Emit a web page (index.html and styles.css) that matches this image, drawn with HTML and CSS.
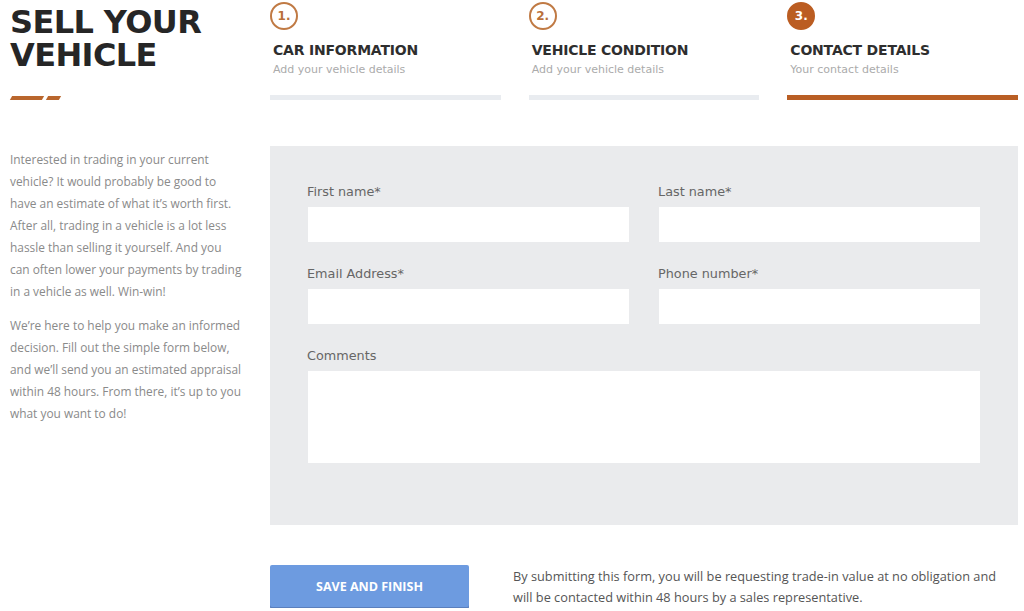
FILE: index.html
```html
<!DOCTYPE html>
<html lang="en">
<head>
<meta charset="utf-8">
<title>Sell Your Vehicle</title>
<link rel="stylesheet" href="styles.css">
</head>
<body>
<div class="page">
  <div class="intro-head">
    <h1 class="title">SELL YOUR<br>VEHICLE</h1>
    <div class="dashes"><span class="dash long"></span><span class="dash short"></span></div>
  </div>
  <ol class="steps">
    <li class="step">
      <span class="num">1.</span>
      <h2 class="step-title">CAR INFORMATION</h2>
      <p class="step-sub">Add your vehicle details</p>
      <div class="bar"></div>
    </li>
    <li class="step">
      <span class="num">2.</span>
      <h2 class="step-title">VEHICLE CONDITION</h2>
      <p class="step-sub">Add your vehicle details</p>
      <div class="bar"></div>
    </li>
    <li class="step active">
      <span class="num">3.</span>
      <h2 class="step-title">CONTACT DETAILS</h2>
      <p class="step-sub">Your contact details</p>
      <div class="bar"></div>
    </li>
  </ol>

  <div class="intro-text">
    <p>Interested in trading in your current vehicle? It would probably be good to have an estimate of what it’s worth first. After all, trading in a vehicle is a lot less hassle than selling it yourself. And you can often lower your payments by trading in a vehicle as well. Win-win!</p>
    <p>We’re here to help you make an informed decision. Fill out the simple form below, and we’ll send you an estimated appraisal within 48 hours. From there, it’s up to you what you want to do!</p>
  </div>

  <form class="panel">
    <label class="field"><span class="label">First name*</span><input class="input" type="text"></label>
    <label class="field"><span class="label">Last name*</span><input class="input" type="text"></label>
    <label class="field"><span class="label">Email Address*</span><input class="input" type="email"></label>
    <label class="field"><span class="label">Phone number*</span><input class="input" type="tel"></label>
    <label class="field wide"><span class="label">Comments</span><textarea class="textarea"></textarea></label>
  </form>

  <div class="spacer"></div>
  <div class="actions">
    <button class="btn" type="button">SAVE AND FINISH</button>
    <p class="note">By submitting this form, you will be requesting trade-in value at no obligation and will be contacted within 48 hours by a sales representative.</p>
  </div>
</div>
</body>
</html>
```
FILE: styles.css
```css
* { box-sizing: border-box; }
html, body { margin: 0; padding: 0; background: #fff; }
body { font-family: "Open Sans", "Liberation Sans", sans-serif; color: #333; }

.page {
  display: grid;
  grid-template-columns: 235px 748px;
  column-gap: 25px;
  padding: 0 0 0 10px;
  width: 1024px;
}

.intro-head { height: 146px; }
.title {
  margin: 6px 0 0;
  font-family: "DejaVu Sans", sans-serif;
  font-weight: 700;
  font-size: 32px;
  line-height: 33px;
  color: #262626;
  letter-spacing: -0.6px;
}
.dashes { display: flex; gap: 4px; margin-top: 24px; padding-left: 1px; }
.dash { height: 4px; background: #b9662d; transform: skewX(-30deg); }
.dash.long { width: 32px; }
.dash.short { width: 13px; }

.steps {
  list-style: none;
  margin: 0;
  padding: 0;
  display: grid;
  grid-template-columns: repeat(3, 1fr);
  column-gap: 28px;
  height: 146px;
}
.step { display: flex; flex-direction: column; align-items: flex-start; padding-top: 2px; }
.num {
  width: 28px; height: 28px;
  border: 2px solid #c07a44;
  border-radius: 50%;
  display: flex; align-items: center; justify-content: center;
  font-family: "DejaVu Sans", sans-serif;
  font-weight: 700; font-size: 12px;
  color: #b9703a;
}
.step.active .num { background: #bb5d22; border-color: #bb5d22; color: #fff; }
.step-title {
  margin: 11px 0 0 3px;
  font-family: "DejaVu Sans", sans-serif;
  font-weight: 700; font-size: 14px;
  line-height: 18px;
  color: #2e2e2e;
  letter-spacing: -0.2px;
}
.step-sub {
  margin: 3px 0 0 3px;
  font-family: "DejaVu Sans", sans-serif;
  font-size: 11px; line-height: 15px;
  color: #ababab;
}
.bar { align-self: stretch; height: 5px; margin-top: 18px; background: #e9ecf0; }
.step.active .bar { background: #b95e24; }

.intro-text { padding-top: 2px; width: 233px; }
.intro-text p {
  margin: 0 0 12px;
  font-size: 11.9px;
  line-height: 22px;
  color: #8a8a8a;
}

.panel {
  background: #eaebed;
  height: 379px;
  padding: 37px 38px 0 38px;
  display: grid;
  grid-template-columns: 1fr 1fr;
  column-gap: 30px;
  row-gap: 23px;
  align-content: start;
}
.field { display: flex; flex-direction: column; }
.field.wide { grid-column: 1 / -1; }
.label {
  font-family: "DejaVu Sans", sans-serif;
  font-size: 12.8px; line-height: 18px;
  color: #666;
  margin: 0 0 6px -1px;
}
.input, .textarea {
  border: 0; background: #fff; font: inherit; display: block; width: 100%; outline: none;
}
.input { height: 35px; }
.textarea { height: 92px; resize: none; }

.spacer { height: 40px; grid-column: 1 / -1; }
.actions { grid-column: 2; display: flex; align-items: flex-start; gap: 44px; }
.btn {
  flex: none;
  width: 199px; height: 42px;
  background: #6d9be0;
  border: 0; border-radius: 2px;
  box-shadow: 0 2px 0 #5a7fbd;
  color: #fff;
  font-family: "Open Sans", sans-serif;
  font-weight: 700; font-size: 12.5px;
  letter-spacing: 0;
}
.note {
  margin: 0;
  padding-top: 1px;
  font-family: "Open Sans", sans-serif;
  font-size: 12.75px; line-height: 21px;
  color: #555;
  width: 505px;
}
```
